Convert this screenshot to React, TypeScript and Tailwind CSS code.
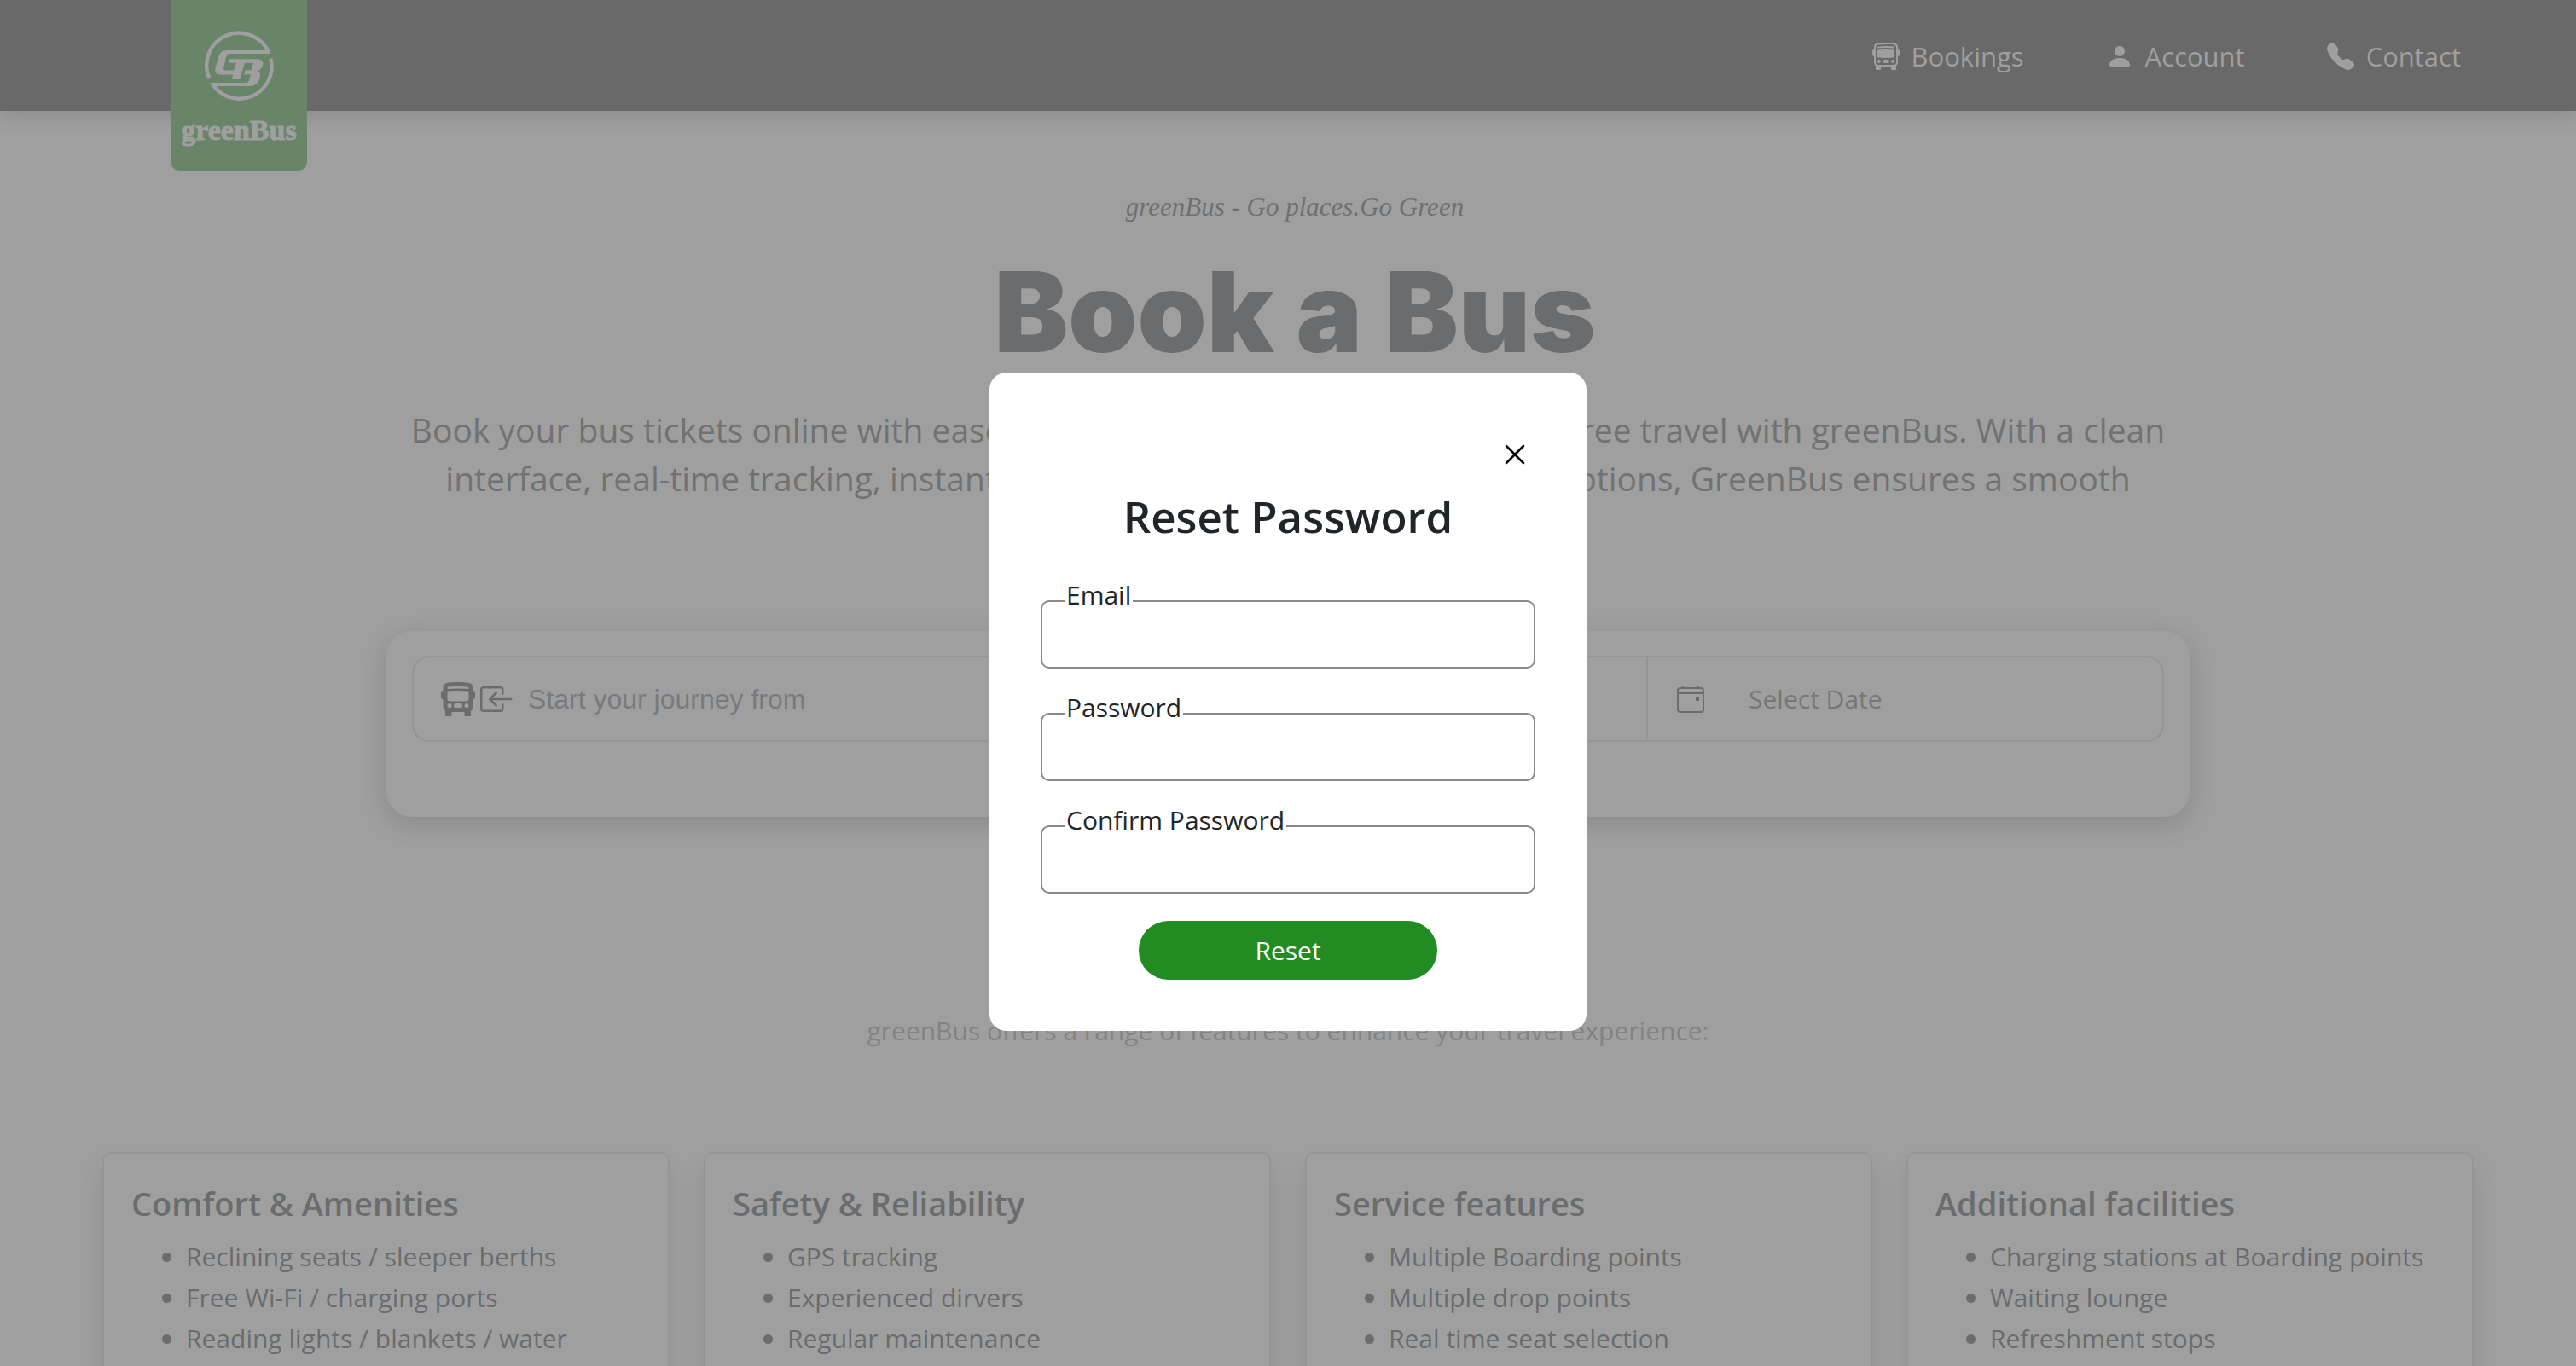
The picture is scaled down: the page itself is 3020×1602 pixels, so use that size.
import {
  BsBoxArrowInLeft,
  BsBoxArrowRight,
  BsBusFront,
  BsBusFrontFill,
  BsPersonFill,
  BsTelephoneFill,
} from "react-icons/bs";

const navLinks = [
  { label: "Bookings", Icon: BsBusFront },
  { label: "Account", Icon: BsPersonFill },
  { label: "Contact", Icon: BsTelephoneFill },
];

const features = [
  {
    title: "Comfort & Amenities",
    items: ["Reclining seats / sleeper berths", "Free Wi-Fi / charging ports", "Reading lights / blankets / water"],
  },
  {
    title: "Safety & Reliability",
    items: ["GPS tracking", "Experienced dirvers", "Regular maintenance"],
  },
  {
    title: "Service features",
    items: ["Multiple Boarding points", "Multiple drop points", "Real time seat selection"],
  },
  {
    title: "Additional facilities",
    items: ["Charging stations at Boarding points", "Waiting lounge", "Refreshment stops"],
  },
];

const fields = [
  { id: "email", label: "Email", type: "email" },
  { id: "password", label: "Password", type: "password" },
  { id: "confirm-password", label: "Confirm Password", type: "password" },
];

function Logo() {
  return (
    <a
      href="#home"
      className="flex h-[200px] w-40 shrink-0 flex-col items-center self-start rounded-b-[10px] bg-[#698569] pt-9 text-[#9f9f9f]"
    >
      <svg viewBox="180 108 242 248" className="h-[83px] w-[81px]" fill="none" aria-hidden="true">
        <path d="M196 275A113 113 0 0 1 404 184" stroke="currentColor" strokeWidth="13" />
        <path d="M411 205A113 113 0 0 1 207 295" stroke="currentColor" strokeWidth="13" />
        <path
          fill="currentColor"
          d="M412 189H268Q258 190 255 200L246 238Q244 247 254 247H283L290 221H263L267 207H362Q387 208 384 227Q380 247 362 249Q378 253 374 268Q368 301 342 302H215L197 290H325Q334 289 337 278L341 261H318L322 247H338Q345 247 347 238L350 221H320L304 278H275L279 262H232Q214 260 217 242L228 200Q234 178 256 177H400Z"
        />
      </svg>
      <span className="mt-4 font-['Liberation_Serif',serif] text-[34px] leading-9 font-bold [-webkit-text-stroke:1px_#9f9f9f]">
        greenBus
      </span>
    </a>
  );
}

function CalendarIcon() {
  return (
    <svg viewBox="0 0 16 16" className="size-8 text-[#6a6c6e]" fill="none" stroke="currentColor" aria-hidden="true">
      <rect x="0.5" y="1.5" width="15" height="14" rx="1.5" />
      <path d="M0.5 4.5H15.5M3.5 0V1.5M12.5 0V1.5" />
      <rect x="11" y="7" width="2" height="2" fill="currentColor" stroke="none" />
    </svg>
  );
}

function Header() {
  return (
    <header className="flex h-[130px] items-center justify-between bg-[#696969] pr-[135px] pl-[200px] shadow-[0_4px_24px_rgba(0,0,0,0.14)]">
      <Logo />
      <nav className="flex items-center gap-24 pt-0.5 text-[31px] text-[#9f9f9f]">
        {navLinks.map(({ label, Icon }) => (
          <a key={label} href={`#${label.toLowerCase()}`} className="flex items-center gap-[14px]">
            <Icon className="size-8" />
            {label}
          </a>
        ))}
      </nav>
    </header>
  );
}

function SearchCard() {
  return (
    <form className="mx-auto mt-[151px] w-[70%] rounded-[30px] px-[30px] pt-[29px] pb-[88px] shadow-[0_8px_32px_rgba(0,0,0,0.14)]">
      <div className="grid h-[101px] grid-cols-[6fr_6fr_5fr] rounded-[20px] border-2 border-[#959595]">
        <label className="flex items-center border-r-2 border-[#959595] pl-8">
          <BsBusFrontFill className="size-10 shrink-0" />
          <BsBoxArrowInLeft className="ml-1.5 size-10 shrink-0" />
          <input
            aria-label="Start your journey from"
            placeholder="Start your journey from"
            className="ml-4 w-full min-w-0 bg-transparent font-['Liberation_Sans',sans-serif] text-[32px] placeholder:text-[#797a7d] placeholder:opacity-100"
          />
        </label>
        <label className="flex items-center border-r-2 border-[#959595] pl-8">
          <BsBusFrontFill className="size-10 shrink-0" />
          <BsBoxArrowRight className="ml-1.5 size-10 shrink-0" />
          <input
            aria-label="Where to?"
            className="ml-4 w-full min-w-0 bg-transparent font-['Liberation_Sans',sans-serif] text-[32px]"
          />
        </label>
        <button type="button" className="flex items-center gap-[52px] pl-[34px] text-[#777777]">
          <CalendarIcon />
          Select Date
        </button>
      </div>
    </form>
  );
}

function FeatureCards() {
  return (
    <section className="mt-[227px]">
      <p className="text-center leading-[48px] text-[#838383]">
        greenBus offers a range of features to enhance your travel experience:
      </p>
      <div className="mt-[118px] grid grid-cols-4 gap-10 px-[120px]">
        {features.map((feature) => (
          <article
            key={feature.title}
            className="rounded-[10px] border-2 border-[#959595] px-8 pt-8 pb-14 shadow-[0_16px_32px_rgba(0,0,0,0.09)]"
          >
            <h3 className="text-[38px] leading-[52px] font-semibold">{feature.title}</h3>
            <ul className="mt-[13px] list-disc pl-16 leading-[48px]">
              {feature.items.map((item) => (
                <li key={item}>{item}</li>
              ))}
            </ul>
          </article>
        ))}
      </div>
    </section>
  );
}

function ResetPasswordDialog() {
  return (
    <div className="fixed inset-0 flex items-center justify-center pt-11">
      <form
        role="dialog"
        aria-modal="true"
        aria-labelledby="reset-title"
        className="flex w-[700px] flex-col rounded-[20px] bg-white p-[60px] text-[#212529]"
      >
        <div className="flex h-[72px] items-center justify-end">
          <button type="button" aria-label="Close" className="flex size-12 items-center justify-center text-black">
            <svg viewBox="0 0 24 24" className="size-6" fill="none" stroke="currentColor" strokeWidth="2.5" aria-hidden="true">
              <path d="M2 2L22 22M22 2L2 22" strokeLinecap="round" />
            </svg>
          </button>
        </div>
        <h2 id="reset-title" className="text-center text-[51px] leading-[72px] font-semibold">
          Reset Password
        </h2>
        <div className="mt-[63px] flex flex-col gap-[52px]">
          {fields.map((field) => (
            <div key={field.id} className="relative">
              <label htmlFor={field.id} className="absolute -top-7 left-7 bg-white px-0.5 leading-[44px]">
                {field.label}
              </label>
              <input
                id={field.id}
                type={field.type}
                className="h-20 w-full rounded-[10px] border-2 border-[#8a8a8a] bg-transparent px-7 outline-none"
              />
            </div>
          ))}
        </div>
        <button type="submit" className="mt-8 h-[69px] w-[350px] self-center rounded-full bg-[#228b22] text-white">
          Reset
        </button>
      </form>
    </div>
  );
}

export default function App() {
  return (
    <div className="h-screen overflow-hidden bg-[#9f9f9f] font-['Open_Sans',sans-serif] text-[30px] text-[#6a6c6e]">
      <Header />
      <main className="pt-[89px]">
        <div className="pl-4 text-center">
          <p className="font-['Liberation_Serif',serif] text-[31px] leading-[48px] text-[#707070] italic">
            greenBus - Go places.Go Green
          </p>
          <h1 className="mt-[34px] font-['Inter',sans-serif] text-[130px] leading-[130px] font-black">Book a Bus</h1>
        </div>
        <p className="mt-11 text-center text-[39px] leading-[57px] text-[#727272]">
          Book your bus tickets online with ease and enjoy safe, comfortable, hassle-free travel with greenBus. With a
          clean
          <br />
          interface, real-time tracking, instant confirmation, and flexible payment options, GreenBus ensures a smooth
        </p>
        <SearchCard />
        <FeatureCards />
      </main>
      <ResetPasswordDialog />
    </div>
  );
}
